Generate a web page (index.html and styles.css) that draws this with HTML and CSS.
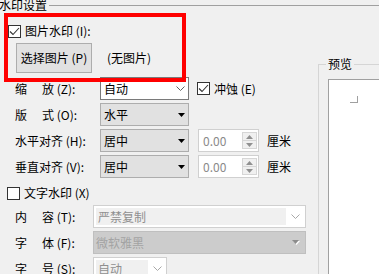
FILE: index.html
```html
<!DOCTYPE html>
<html lang="zh-CN">
<head>
<meta charset="utf-8">
<title>水印设置</title>
<link rel="stylesheet" href="styles.css">
</head>
<body>
<div class="legend-row"><span class="legend">水印设置</span><span class="rule"></span></div>
<div class="body">
  <div class="left">
    <div class="chk-row pic"><span class="cb"><svg width="11" height="11" viewBox="0 0 11 11"><polyline points="1,5.5 4,8.5 10,2" fill="none" stroke="#333" stroke-width="1.1"/></svg></span>图片水印 (I):</div>
    <div class="btn-row"><button class="btn">选择图片 (P)</button><span class="noimg">(无图片)</span></div>
    <div class="rows">
      <div class="row">
        <span class="lbl"><span class="c1">缩</span>放 (Z):</span>
        <div class="sel white"><span class="val">自动</span><svg class="chev" width="9" height="5" viewBox="0 0 9 5"><polyline points="0.5,0.5 4.5,4.5 8.5,0.5" fill="none" stroke="#606060" stroke-width="1"/></svg></div>
        <div class="chk-inline"><span class="cb"><svg width="11" height="11" viewBox="0 0 11 11"><polyline points="1,5.5 4,8.5 10,2" fill="none" stroke="#333" stroke-width="1.1"/></svg></span>冲蚀 (E)</div>
      </div>
      <div class="row">
        <span class="lbl"><span class="c1">版</span>式 (O):</span>
        <div class="sel gray"><span class="val">水平</span><svg class="tri" width="7" height="4" viewBox="0 0 7 4"><polygon points="0,0 7,0 3.5,4" fill="#000"/></svg></div>
      </div>
      <div class="row">
        <span class="lbl">水平对齐 (H):</span>
        <div class="sel gray"><span class="val">居中</span><svg class="tri" width="7" height="4" viewBox="0 0 7 4"><polygon points="0,0 7,0 3.5,4" fill="#000"/></svg></div>
        <div class="spin"><span class="num">0.00</span><span class="spbtns"><span class="sp up"><svg width="7" height="4" viewBox="0 0 7 4"><polygon points="0,4 7,4 3.5,0" fill="#909090"/></svg></span><span class="sp dn"><svg width="7" height="4" viewBox="0 0 7 4"><polygon points="0,0 7,0 3.5,4" fill="#909090"/></svg></span></span></div>
        <span class="unit">厘米</span>
      </div>
      <div class="row">
        <span class="lbl">垂直对齐 (V):</span>
        <div class="sel gray"><span class="val">居中</span><svg class="tri" width="7" height="4" viewBox="0 0 7 4"><polygon points="0,0 7,0 3.5,4" fill="#000"/></svg></div>
        <div class="spin"><span class="num">0.00</span><span class="spbtns"><span class="sp up"><svg width="7" height="4" viewBox="0 0 7 4"><polygon points="0,4 7,4 3.5,0" fill="#909090"/></svg></span><span class="sp dn"><svg width="7" height="4" viewBox="0 0 7 4"><polygon points="0,0 7,0 3.5,4" fill="#909090"/></svg></span></span></div>
        <span class="unit">厘米</span>
      </div>
    </div>
    <div class="chk-row txt"><span class="cb"></span>文字水印 (X)</div>
    <div class="rows rows2">
      <div class="row">
        <span class="lbl lbl2"><span class="c1">内</span>容 (T):</span>
        <div class="combo wide"><span class="field">严禁复制</span><span class="dd"><svg width="9" height="5" viewBox="0 0 9 5"><polyline points="0.5,0.5 4.5,4.5 8.5,0.5" fill="none" stroke="#a8a8a8" stroke-width="1"/></svg></span></div>
      </div>
      <div class="row">
        <span class="lbl lbl2"><span class="c1">字</span>体 (F):</span>
        <div class="sel dis"><span class="val">微软雅黑</span><svg class="tri" width="8" height="5" viewBox="0 0 8 5"><polygon points="1,1 8,1 4.5,5" fill="#fff"/><polygon points="0,0 7,0 3.5,4" fill="#8c8c8c"/></svg></div>
      </div>
      <div class="row">
        <span class="lbl lbl2"><span class="c1">字</span>号 (S):</span>
        <div class="combo small"><span class="field">自动</span><span class="dd"><svg width="9" height="5" viewBox="0 0 9 5"><polyline points="0.5,0.5 4.5,4.5 8.5,0.5" fill="none" stroke="#a8a8a8" stroke-width="1"/></svg></span></div>
      </div>
    </div>
  </div>
  <fieldset class="preview">
    <legend>预览</legend>
    <div class="pv-box"><div class="crop"></div></div>
  </fieldset>
</div>
<div class="redbox"></div>
</body>
</html>
```

FILE: styles.css
```css
* { box-sizing: border-box; }
html, body { margin: 0; padding: 0; }
body {
  width: 379px;
  height: 274px;
  overflow: hidden;
  position: relative;
  background: #f0f0f0;
  color: #000;
  font-family: "Noto Sans CJK SC", "Microsoft YaHei", sans-serif;
  font-size: 12px;
  line-height: 16px;
}
.legend-row { display: flex; align-items: center; height: 10px; }
.legend { margin-left: -1px; white-space: nowrap; }
.rule { flex: 1; height: 0; border-top: 1px solid #a0a0a0; margin-left: 2px; }

.body { display: flex; }
.left { width: 310px; flex: none; }

.chk-row { display: flex; align-items: center; height: 16px; white-space: nowrap; }
.chk-row.pic { margin-top: 13px; padding-left: 8px; }
.chk-row.txt { margin-top: 7px; padding-left: 7px; }
.cb {
  width: 13px; height: 13px; flex: none;
  border: 1px solid #333; background: #fff;
  margin-right: 4px;
  display: flex; align-items: center; justify-content: center;
}

.btn-row { display: flex; align-items: center; margin-top: 4px; }
.btn {
  margin-left: 16px; width: 76px; height: 30px; padding: 0;
  background: #e1e1e1; border: 1px solid #adadad;
  font: inherit; color: #000; white-space: nowrap;
}
.noimg { margin-left: 15px; }

.rows { margin-top: 4px; display: flex; flex-direction: column; gap: 3px; }
.rows2 { margin-top: 4px; }
.row { display: flex; align-items: center; height: 23px; white-space: nowrap; }
.lbl { width: 100px; padding-left: 15px; flex: none; }
.lbl2 { width: 93px; }
.c1 { display: inline-block; width: 27px; }

.sel {
  width: 89px; height: 23px; flex: none;
  display: flex; align-items: center; justify-content: space-between;
  padding: 0 3px 0 3px;
}
.sel.white { background: #fff; border: 1px solid #7a7a7a; }
.sel.gray { background: #e1e1e1; border: 1px solid #adadad; }
.sel.dis { width: 213px; background: #cccccc; border: 1px solid #bfbfbf; color: #a3a3a3; padding: 0 5px 0 2px; }
.chev, .tri { flex: none; }

.chk-inline { display: flex; align-items: center; margin-left: 8px; }

.spin {
  margin-left: 9px; width: 61px; height: 23px; flex: none;
  background: #fff; border: 1px solid #d0d0d0;
  display: flex; align-items: stretch;
}
.num { flex: 1; color: #8a8a8a; padding-left: 4px; line-height: 21px; }
.spbtns { width: 16px; display: flex; flex-direction: column; padding: 2px 1px 2px 0; }
.sp {
  flex: 1; display: flex; align-items: center; justify-content: center;
  background: #f0f0f0; border: 1px solid #d6d6d6;
}
.sp.dn { border-top: none; }
.unit { margin-left: 8px; }

.combo {
  height: 23px; flex: none;
  background: #fff; border: 1px solid #d0d0d0;
  padding: 2px 0 2px 2px;
  display: flex;
}
.combo.wide { width: 213px; }
.combo.small { width: 74px; }
.field { flex: 1; background: #f0f0f0; color: #8f8f8f; padding-left: 2px; line-height: 17px; }
.dd { width: 19px; flex: none; display: flex; align-items: center; justify-content: center; }
.combo.small .dd { width: 18px; }

.preview {
  flex: 1; min-width: 0;
  margin: 46px 0 0 8px;
  padding: 0 0 0 7px;
  border: 1px solid #d5d5d5;
  border-right: none; border-bottom: none;
}
.preview legend { padding: 0 2px; line-height: 16px; }
.pv-box {
  margin: 7px 0 0 2px;
  height: 220px;
  background: #fff;
  border: 1px solid #a0a0a0;
  border-right: none; border-bottom: none;
  padding: 16px 0 0 21px;
}
.crop { width: 8px; height: 7px; border-right: 1px solid #a0a0a0; border-bottom: 1px solid #a0a0a0; }

.redbox {
  position: absolute;
  left: 4px; top: 13px; width: 182px; height: 69px;
  border: 4px solid #ff0000;
}
```
